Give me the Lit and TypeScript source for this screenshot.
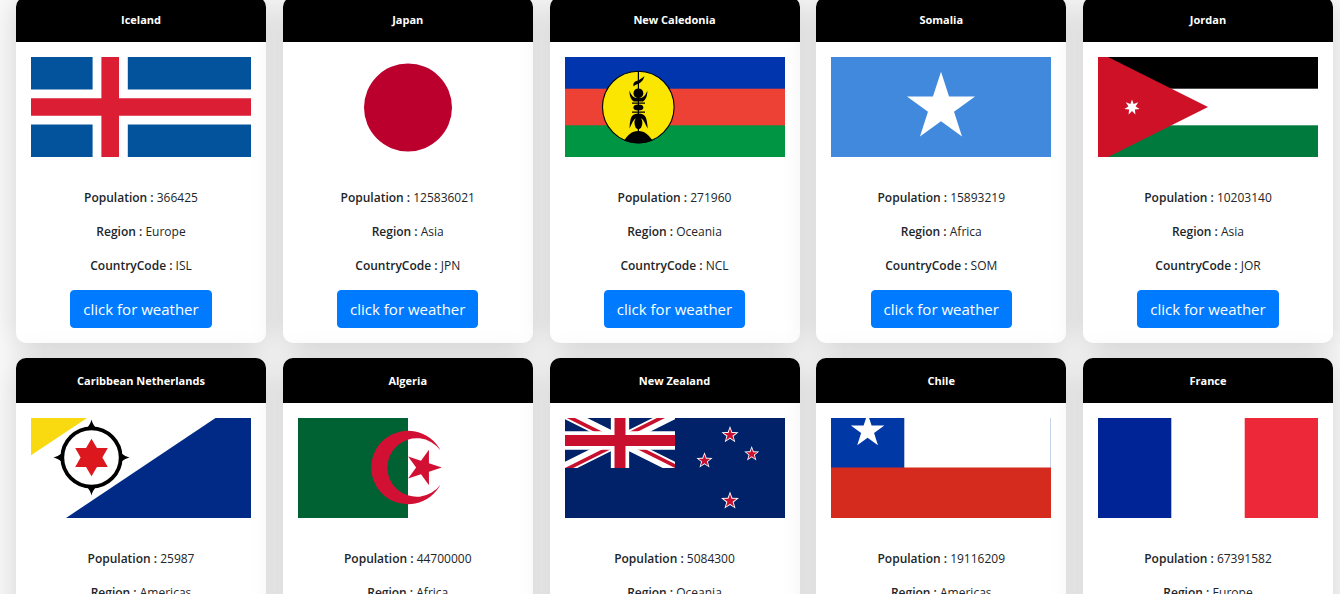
import { LitElement, html, css, svg, type TemplateResult } from "lit";
import { customElement, property } from "lit/decorators.js";

interface Country {
  name: string;
  population: number;
  region: string;
  code: string;
}

const countries: Country[] = [
  { name: "Iceland", population: 366425, region: "Europe", code: "ISL" },
  { name: "Japan", population: 125836021, region: "Asia", code: "JPN" },
  { name: "New Caledonia", population: 271960, region: "Oceania", code: "NCL" },
  { name: "Somalia", population: 15893219, region: "Africa", code: "SOM" },
  { name: "Jordan", population: 10203140, region: "Asia", code: "JOR" },
  { name: "Caribbean Netherlands", population: 25987, region: "Americas", code: "BES" },
  { name: "Algeria", population: 44700000, region: "Africa", code: "DZA" },
  { name: "New Zealand", population: 5084300, region: "Oceania", code: "NZL" },
  { name: "Chile", population: 19116209, region: "Americas", code: "CHL" },
  { name: "France", population: 67391582, region: "Europe", code: "FRA" },
];

// Vertices of a regular star; `turn` is the direction of the first tip in degrees.
function star(cx: number, cy: number, outer: number, inner: number, tips = 5, turn = -90): string {
  const pts: string[] = [];
  for (let i = 0; i < tips * 2; i++) {
    const r = i % 2 ? inner : outer;
    const a = ((turn + (i * 180) / tips) * Math.PI) / 180;
    pts.push(`${(cx + r * Math.cos(a)).toFixed(2)},${(cy + r * Math.sin(a)).toFixed(2)}`);
  }
  return pts.join(" ");
}

const southernCross = [
  [165, 17, 9],
  [186.7, 36, 7.9],
  [139.5, 42.7, 8.5],
  [165, 83, 9.4],
];

const flags: Record<string, TemplateResult> = {
  ISL: svg`
    <rect width="220" height="100" fill="#02529c"/>
    <path d="M61.6 0h35.2v32.4H220v35.2H96.8V100H61.6V67.6H0V32.4h61.6z" fill="#fff"/>
    <path d="M70.4 0H88v41.2h132v17.6H88V100H70.4V58.8H0V41.2h70.4z" fill="#dc1e35"/>`,
  JPN: svg`
    <rect width="220" height="100" fill="#fff"/>
    <circle cx="110" cy="50.5" r="44" fill="#bc002d"/>`,
  NCL: svg`
    <rect width="220" height="100" fill="#0035ad"/>
    <rect y="31.7" width="220" height="69" fill="#ed4135"/>
    <rect y="68.3" width="220" height="32" fill="#009543"/>
    <circle cx="73.3" cy="50" r="35.8" fill="#fae600" stroke="#000" stroke-width="1.1"/>
    <path d="M59.3 83c4-5 7-9 14-9s10 4 14 9c-8 4.500-20 4.500-28 0z"/>
    <path d="M72.800 14h1.200v62h-1.200z"/>
    <path d="M79.500 19c-1 4-3 6-5.500 7.500-2.500 1-4 1.500-5.500 3-.8-3 .5-4.500 3-5.500 3-1 5-2.500 8-5z"/>
    <circle cx="73.400" cy="36.300" r="4.900"/>
    <path d="M64.500 33.500c1.500 5 4 7.500 8.900 7.800 4.900-.3 7.400-2.800 8.900-7.800.3 5.500-1.800 9.500-4.300 11h-9.200c-2.500-1.500-4.600-5.500-4.300-11z"/>
    <path d="M67 45.400h13v1.300H67zM67 54.400h13v1.300H67z"/>
    <ellipse cx="73.400" cy="50.500" rx="5" ry="2.900"/>
    <path d="M64.500 71.500c.5-7.500 1-12.500 4.500-14 3-1.300 6-1.300 9 0 3.500 1.500 4 6.500 4.800 14-2.500-4-3.800-8.500-6.300-10h-6c-2.500 1.500-4 6-6 10z"/>
    <ellipse cx="73.400" cy="66" rx="3.900" ry="6.200"/>`,
  SOM: svg`
    <rect width="220" height="100" fill="#4189dd"/>
    <polygon points=${star(110, 50.5, 35.8, 13.7)} fill="#fff"/>`,
  JOR: svg`
    <rect width="220" height="100" fill="#fff"/>
    <rect width="220" height="31.700"/>
    <rect y="68.300" width="220" height="31.700" fill="#007a3d"/>
    <path d="M0-5l110 55L0 105z" fill="#ce1126"/>
    <polygon points=${star(34, 50.3, 7.9, 3.7, 7)} fill="#fff"/>`,
  BES: svg`
    <rect width="220" height="100" fill="#fff"/>
    <path d="M0 0h56L0 37.300z" fill="#f9d90f"/>
    <path d="M220 0v100H35L184.500 0z" fill="#012a87"/>
    <circle cx="60.500" cy="39.500" r="29.200" fill="#fff" stroke="#000" stroke-width="3.800"/>
    <path d="M60.500 1.500c.7 3 2 5.500 4 8h-8c2-2.500 3.300-5 4-8zM60.500 77.500c.7-3 2-5.500 4-8h-8c2 2.500 3.300 5 4 8zM22.500 39.500c3-.7 5.500-2 8-4v8c-2.500-2-5-3.300-8-4zM98.500 39.500c-3-.7-5.500-2-8-4v8c2.500-2 5-3.300 8-4z"/>
    <polygon points=${star(60.5, 39.5, 18.8, 10.9, 6)} fill="#dc171d"/>`,
  DZA: svg`
    <rect width="220" height="100" fill="#fff"/>
    <rect width="110" height="100" fill="#006233"/>
    <path d="M142.400 32.300a36.700 36.700 0 1 0 0 34.400 29.300 29.300 0 1 1 0-34.400z" fill="#d21034"/>
    <polygon points=${star(125.2, 49.5, 18.6, 7.1, 5, 0)} fill="#d21034"/>`,
  NZL: svg`
    <rect width="220" height="100" fill="#012169"/>
    <clipPath id="canton"><rect width="110" height="50"/></clipPath>
    <clipPath id="saltire"><path d="M55 22.500h55V50zM55 22.500V50H0zM55 22.500H0V-5zM55 22.500V-5h55z"/></clipPath>
    <g clip-path="url(#canton)">
      <path d="M0-5l110 55M110-5L0 50" stroke="#fff" stroke-width="11"/>
      <path d="M0-5l110 55M110-5L0 50" stroke="#c8102e" stroke-width="7.300" clip-path="url(#saltire)"/>
      <path d="M55-5v55M0 22.500h110" stroke="#fff" stroke-width="18.300"/>
      <path d="M55-5v55M0 22.500h110" stroke="#c8102e" stroke-width="11"/>
    </g>
    ${southernCross.map(
      ([x, y, r]) => svg`
        <polygon points=${star(x, y, r, r * 0.42)} fill="#fff"/>
        <polygon points=${star(x, y, r * 0.74, r * 0.29)} fill="#c8102e"/>`
    )}`,
  CHL: svg`
    <rect width="220" height="100" fill="#fff"/>
    <rect width="73.300" height="50" fill="#0039a6"/>
    <rect x="219" width="1" height="50" fill="#c8d3ec"/>
    <rect y="49.500" width="220" height="50.500" fill="#d52b1e"/>
    <polygon points=${star(36.6, 13, 17.6, 6.8)} fill="#fff"/>`,
  FRA: svg`
    <rect width="220" height="100" fill="#fff"/>
    <rect width="73.300" height="100" fill="#002395"/>
    <rect x="146.700" width="73.300" height="100" fill="#ed2939"/>`,
};

@customElement("country-card")
export class CountryCard extends LitElement {
  @property({ attribute: false }) country!: Country;

  static styles = css`
    :host {
      display: block;
      border-radius: 10px;
      background: #fff;
      box-shadow: 0 5px 32px rgba(0, 0, 0, 0.17);
      font-size: 12px;
      line-height: 18px;
      text-align: center;
      color: #212529;
    }
    .title {
      margin: 0;
      padding: 13px 15px;
      border-radius: 10px 10px 0 0;
      background: #000;
      color: #fff;
      font-size: 11px;
      font-weight: 700;
      line-height: 19px;
    }
    .body {
      padding: 15px;
    }
    .flag {
      display: block;
      width: 100%;
      height: 100px;
      margin-bottom: 32px;
    }
    .fact {
      margin: 0 0 16px;
    }
    .fact:last-of-type {
      margin-bottom: 15px;
    }
    .label {
      font-weight: 600;
    }
    .weather {
      padding: 6px 12px;
      border: 1px solid #007bff;
      border-radius: 4px;
      background: #007bff;
      color: #fff;
      font: inherit;
      font-size: 15px;
      line-height: 24px;
      vertical-align: top;
      cursor: pointer;
    }
    .weather:hover {
      background: #0069d9;
    }
  `;

  render() {
    const c = this.country;
    return html`
      <h2 class="title">${c.name}</h2>
      <div class="body">
        <svg class="flag" viewBox="0 0 220 100" preserveAspectRatio="xMidYMid slice" role="img" aria-label=${c.name}>
          ${flags[c.code]}
        </svg>
        <p class="fact"><span class="label">Population :</span> ${c.population}</p>
        <p class="fact"><span class="label">Region :</span> ${c.region}</p>
        <p class="fact"><span class="label">CountryCode :</span> ${c.code}</p>
        <button class="weather" type="button">click for weather</button>
      </div>
    `;
  }
}

@customElement("app-root")
export class AppRoot extends LitElement {
  static styles = css`
    :host {
      display: block;
      height: 100vh;
      overflow-y: auto;
      scrollbar-width: none;
      background: #fafafa;
      font-family: "Segoe UI", "Open Sans", "Noto Sans", sans-serif;
    }
    .grid {
      display: grid;
      grid-template-columns: repeat(auto-fill, 250px);
      justify-content: space-between;
      gap: 15px;
      margin-top: -3px;
      padding: 0 7px 15px 16px;
    }
  `;

  render() {
    return html`
      <main class="grid">
        ${countries.map((c) => html`<country-card .country=${c}></country-card>`)}
      </main>
    `;
  }
}
